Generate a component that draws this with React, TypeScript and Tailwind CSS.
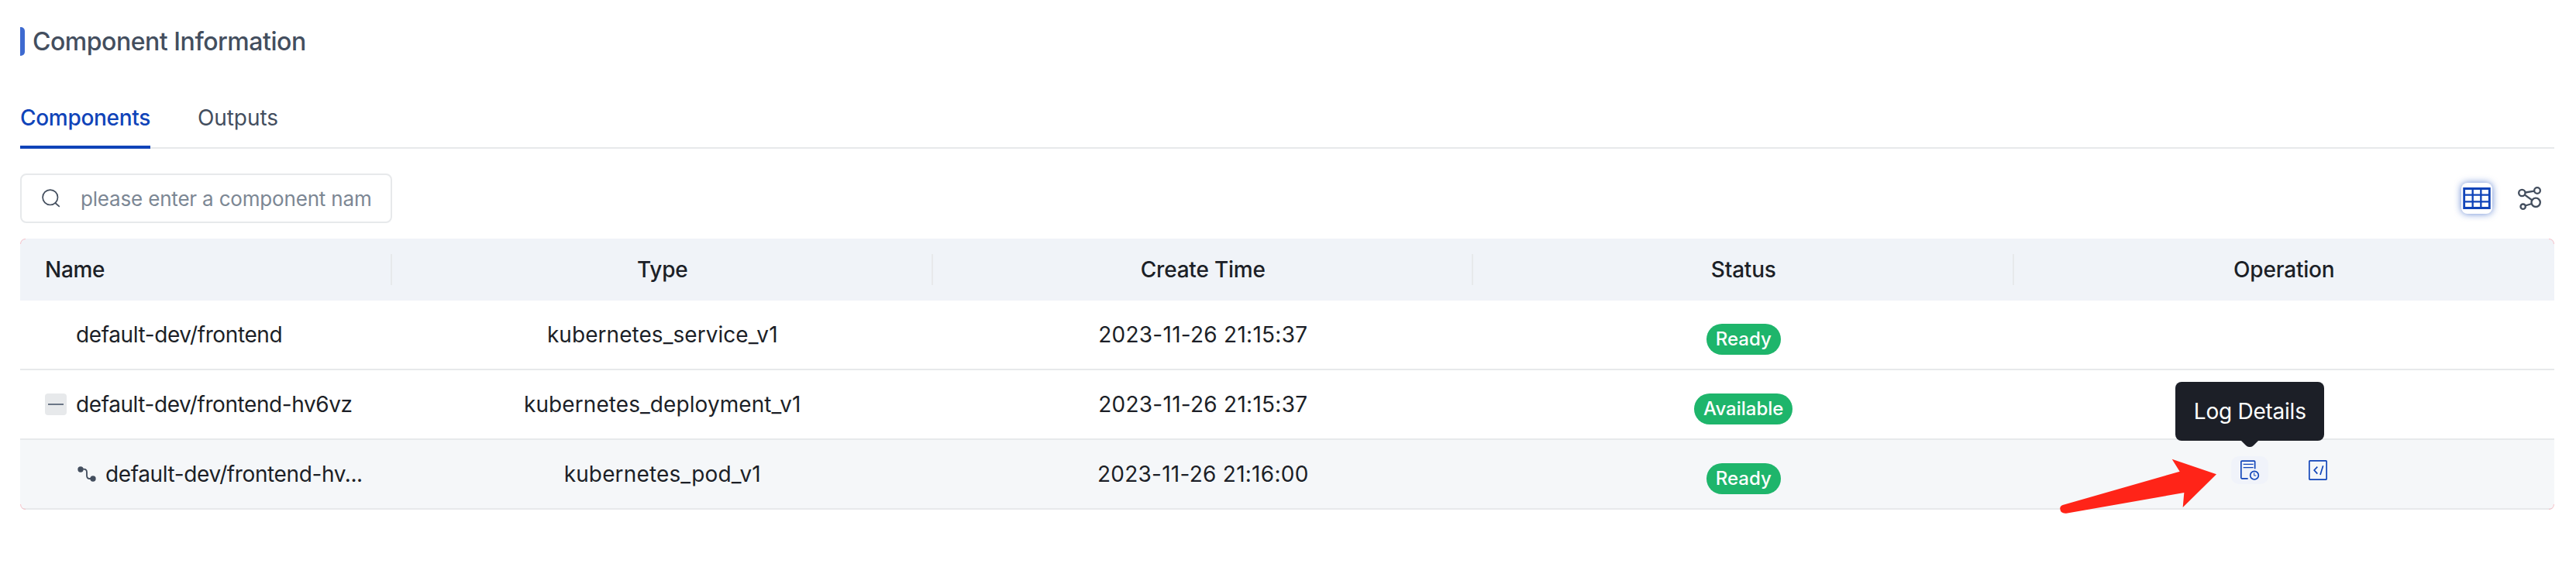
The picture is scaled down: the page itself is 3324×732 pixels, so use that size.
function SearchIcon() {
  return (
    <svg className="h-6 w-6 shrink-0" viewBox="0 0 24 24" fill="none" stroke="#434e5e" strokeWidth="1.7">
      <circle cx="10.8" cy="10.8" r="9.7" />
      <path d="M17.3 18L22.8 22.800" />
    </svg>
  );
}

function TableIcon() {
  return (
    <svg className="h-7 w-9" viewBox="0 0 108 84" fill="none" stroke="#1044b9">
      <path strokeWidth="8.5" d="M5 4.500h98v75h-98z" />
      <path strokeWidth="7" d="M38 3v78M70 3v78M3 29h102M3 55h102" />
    </svg>
  );
}

function GraphIcon() {
  return (
    <svg className="h-[30px] w-[30px] overflow-visible" viewBox="0 0 90 90" fill="none" stroke="#434e5e" strokeWidth="7">
      <circle cx="16" cy="24" r="12.500" />
      <circle cx="75" cy="15" r="11.500" />
      <circle cx="69.500" cy="61" r="17" />
      <circle cx="20" cy="77" r="9.500" />
      <path d="M29 22.500L63 17M27 32L56 53M29 73.500L54 66" />
    </svg>
  );
}

function BranchIcon() {
  return (
    <svg className="h-5 w-6 shrink-0" viewBox="0 0 72 60" fill="none" stroke="#434e5e" strokeWidth="5.500">
      <path d="M12 11H24Q36 11 36 23V35Q36 48 48 48H60" />
      <circle cx="12" cy="12" r="11" fill="#434e5e" stroke="none" />
      <circle cx="60" cy="48" r="11" fill="#434e5e" stroke="none" />
    </svg>
  );
}

function LogIcon() {
  return (
    <svg className="h-9 w-12" viewBox="0 0 144 108" fill="none" stroke="#1044b9" strokeWidth="5">
      <path d="M92 49V21q0-2.500-2.500-2.500h-48q-3 0-3 3v62q0 3 3 3H65" />
      <path strokeWidth="4" d="M47 31h39M47 44h39" />
      <circle cx="90" cy="74" r="16" />
      <path strokeWidth="3" d="M89 64v11h8" />
    </svg>
  );
}

function CodeIcon() {
  return (
    <svg className="h-9 w-12" viewBox="0 0 144 108" fill="none" stroke="#1044b9" strokeWidth="5">
      <rect x="38.500" y="17.500" width="67" height="73" rx="2.500" />
      <path d="M70 41L57.500 54L70 68M92 37L81 72" />
    </svg>
  );
}

function Arrow() {
  return (
    <svg className="absolute left-[2656.7px] top-[590px] h-[75px] w-[205px]" viewBox="170 390 615 225" fill="#ff2418">
      <path d="M779 457L607 398L637 446L184 576Q172 581 174 592Q176 610 198 608L654 528L649 585Z" />
    </svg>
  );
}

function Badge({ text }: { text: string }) {
  return (
    <span className="mt-3 inline-flex h-10 items-center rounded-[20px] bg-[#1eb56b] px-3 text-2xl font-medium text-white">
      {text}
    </span>
  );
}

function Corner({ place }: { place: string }) {
  return (
    <svg className={`absolute h-[7px] w-[7px] ${place}`} viewBox="0 0 7 7" fill="none">
      <path d="M0 0H7Q0 0 0 7Z" fill="#ffffff" />
      <path d="M0.500 7Q1 1 7 0.500" stroke="#f9b4bd" strokeWidth="0.8" />
    </svg>
  );
}

const rows = [
  { name: "default-dev/frontend", type: "kubernetes_service_v1", time: "2023-11-26 21:15:37", status: "Ready", nameTrack: "tracking-[-0.4px]", typeTrack: "tracking-[0.05px]" },
  { name: "default-dev/frontend-hv6vz", type: "kubernetes_deployment_v1", time: "2023-11-26 21:15:37", status: "Available", nameTrack: "tracking-[-0.42px]", typeTrack: "tracking-[0.08px]" },
  { name: "default-dev/frontend-hv...", type: "kubernetes_pod_v1", time: "2023-11-26 21:16:00", status: "Ready", nameTrack: "tracking-[-0.39px]", typeTrack: "tracking-[0.15px]" },
];

const cols = "grid grid-cols-[480px_repeat(4,minmax(0,1fr))]";
const headers = ["Type", "Create Time", "Status", "Operation"];

export default function App() {
  return (
    <div className="relative h-[732px] w-[3324px] overflow-hidden bg-white font-['Inter',sans-serif] text-[28px] text-[#1c1f27]">
      <div className="px-[26px] pt-[35px] pr-7">
        <div className="flex h-[37px] items-center gap-[10px]">
          <div className="h-full w-[6px] rounded-r-[5px] bg-[#3e6ad0]" />
          <h1 className="text-[32px] leading-[37px] font-medium tracking-[-0.47px] text-[#434e5e]">Component Information</h1>
        </div>

        <div className="mt-10 flex h-20 gap-[61px] border-b-2 border-[#e7e9eb] leading-[80px]">
          <div className="h-20 border-b-4 border-[#1044b9] font-medium tracking-[-0.3px] text-[#1044b9]">Components</div>
          <div className="tracking-[-0.1px] text-[#434e5e]">Outputs</div>
        </div>

        <div className="mt-8 flex h-16 items-center justify-between">
          <div className="flex h-16 w-[480px] items-center rounded-lg border-2 border-[#e7e9eb] pl-[26px]">
            <SearchIcon />
            <input
              className="ml-[26px] w-[376px] bg-transparent text-[26px] tracking-[-0.18px] outline-none placeholder:text-[#7c8794]"
              placeholder="please enter a component name"
            />
          </div>
          <div className="flex items-center gap-[33px] pr-[17px]">
            <div className="flex h-10 w-10 items-center justify-center rounded-lg bg-white shadow-[0_0_10px_rgba(16,68,185,0.65)]">
              <TableIcon />
            </div>
            <GraphIcon />
          </div>
        </div>

        <div className="relative mt-5">
          <div className={`${cols} h-20 items-center bg-[#f0f3f8] font-medium`}>
            <div className="flex h-10 items-center border-r-2 border-[#e7e9eb] pl-8 tracking-[-0.3px]">Name</div>
            {headers.map((h, i) => (
              <div key={h} className={`flex h-10 items-center justify-center tracking-[-0.2px] ${i < 3 ? "border-r-2 border-[#e7e9eb] pl-[2px]" : ""}`}>
                {h}
              </div>
            ))}
          </div>
          {rows.map((r, i) => (
            <div key={r.name} className={`${cols} h-[90px] items-center border-b-2 border-[#e7e9eb] ${i === 2 ? "bg-[#f5f7f9]" : ""}`}>
              <div className={`flex items-center whitespace-nowrap ${i === 1 ? "pl-8" : i === 2 ? "pl-[74px]" : "pl-[72px]"}`}>
                {i === 1 && (
                  <span className="mr-3 flex h-7 w-7 items-center justify-center rounded bg-[#e7e9eb]">
                    <span className="h-[2px] w-5 bg-[#6b7686]" />
                  </span>
                )}
                {i === 2 && (
                  <span className="mr-3">
                    <BranchIcon />
                  </span>
                )}
                <span className={r.nameTrack}>{r.name}</span>
              </div>
              <div className={`text-center ${r.typeTrack}`}>{r.type}</div>
              <div className="text-center tracking-[0.26px]">{r.time}</div>
              <div className="flex justify-center">
                <Badge text={r.status} />
              </div>
              {i === 2 && (
                <div className="flex justify-center gap-10 pb-[10px]">
                  <div className="relative h-9 w-12 rounded-[10px] bg-[#f0f3fa]">
                    <LogIcon />
                    <div className="absolute bottom-full left-1/2 mb-5 flex h-[76px] w-48 -translate-x-1/2 items-center justify-center rounded-lg bg-[#1c1f27] tracking-[-0.25px] text-white">
                      Log Details
                      <svg className="absolute top-full left-1/2 h-2 w-[22px] -translate-x-1/2" viewBox="0 0 22 8" fill="#1c1f27">
                        <path d="M0 0H22L16 6Q14 8 12 8H10Q8 8 6 6Z" />
                      </svg>
                    </div>
                  </div>
                  <div className="h-9 w-12">
                    <CodeIcon />
                  </div>
                </div>
              )}
            </div>
          ))}
          <Corner place="left-0 top-0" />
          <Corner place="right-0 top-0 rotate-90" />
          <Corner place="bottom-0 left-0 -rotate-90" />
          <Corner place="right-0 bottom-0 rotate-180" />
        </div>
      </div>
      <Arrow />
    </div>
  );
}
